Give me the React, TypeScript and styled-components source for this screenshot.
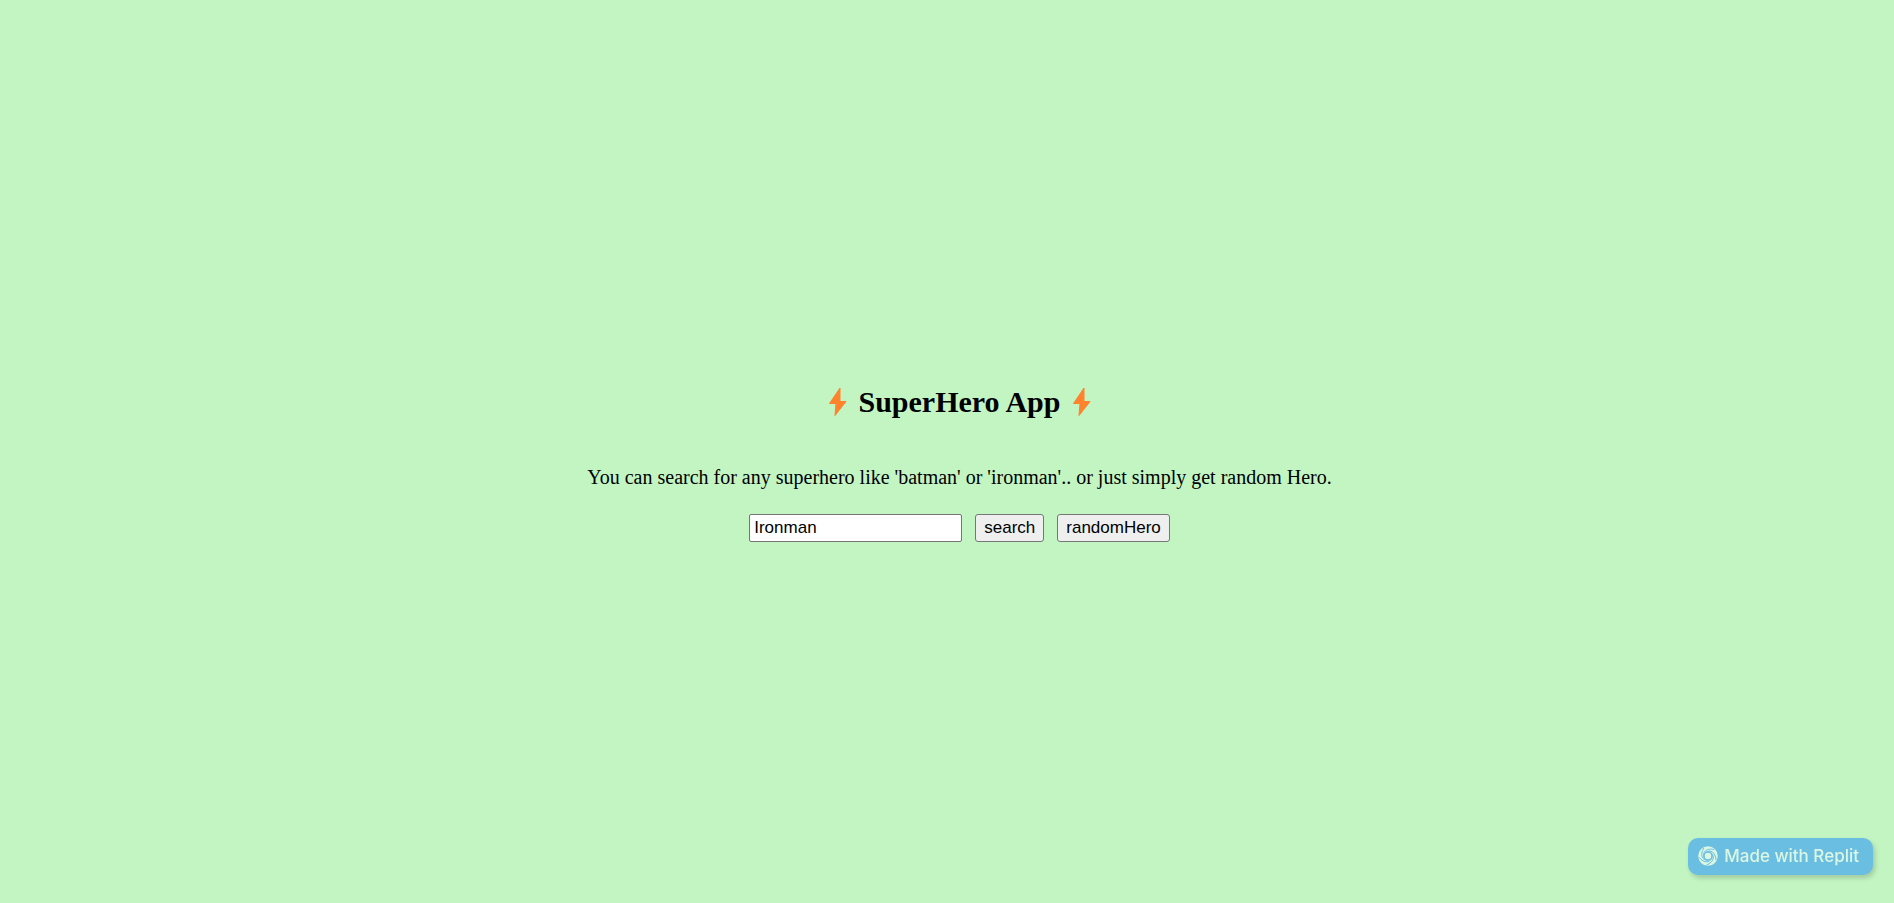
import React from "react";
import styled, { createGlobalStyle } from "styled-components";

const GlobalStyle = createGlobalStyle`
  body {
    margin: 0;
    background: #c3f5c3;
    color: #000;
    font-family: "Liberation Serif", serif;
    font-size: 20px;
  }
`;

const Page = styled.main`
  box-sizing: border-box;
  min-height: 100vh;
  padding: 23px 0 0 25px;
  display: flex;
  flex-direction: column;
  align-items: center;
  justify-content: center;
`;

const Title = styled.h1`
  margin: 0 0 45px;
  display: flex;
  align-items: center;
  gap: 8px;
  font-size: 30px;
  line-height: 36px;
`;

const BoltIcon = styled.svg`
  width: 26px;
  height: 32px;
`;

const Hint = styled.p`
  margin: 0 0 25px;
  line-height: 24px;
`;

const SearchForm = styled.form`
  display: flex;
  gap: 13px;
`;

const NameInput = styled.input`
  box-sizing: border-box;
  width: 213px;
  height: 28px;
  padding: 1px 4px;
  border: 1px solid #767676;
  border-radius: 2px;
  font: 17px "Liberation Sans", sans-serif;
`;

const Button = styled.button`
  box-sizing: border-box;
  height: 28px;
  padding: 1px 8px;
  border: 1px solid #767676;
  border-radius: 3px;
  background: #efefef;
  color: #000;
  font: 17px "Liberation Sans", sans-serif;
`;

const Badge = styled.a`
  position: fixed;
  right: 21px;
  bottom: 28px;
  box-sizing: border-box;
  height: 37px;
  padding: 0 14px 1px 10px;
  display: flex;
  align-items: center;
  gap: 6px;
  border-radius: 10px;
  background: #69bee1;
  box-shadow: 2px 3px 5px rgba(0, 0, 0, 0.18);
  color: #dcf6e4;
  font: 500 17px Inter, sans-serif;
  text-decoration: none;
`;

const SwirlIcon = styled.svg`
  width: 20px;
  height: 20px;
`;

const Bolt = () => (
  <BoltIcon viewBox="0 0 26 32" aria-hidden="true">
    <path
      d="M15 2 4.500 17.500h6.500L10 29.500 21 15.500h-6z"
      fill="#ff822d"
      stroke="#ff822d"
      strokeWidth="1"
      strokeLinejoin="round"
    />
  </BoltIcon>
);

const arms = [0, 72, 144, 216, 288];

const Swirl = () => (
  <SwirlIcon viewBox="0 0 40 40" aria-hidden="true">
    <circle cx="20" cy="20" r="19.500" fill="#dcf6e4" />
    <g fill="none" stroke="#69bee1" strokeWidth="1.800" strokeLinecap="round">
      {arms.map((angle) => (
        <path key={angle} d="M11.500 22C8 12 17 3 32 7" transform={`rotate(${angle} 20 20)`} />
      ))}
    </g>
    <circle cx="20" cy="20" r="8" fill="none" stroke="#69bee1" strokeWidth="3" />
  </SwirlIcon>
);

export default function App() {
  return (
    <>
      <GlobalStyle />
      <Page>
        <Title><Bolt />SuperHero App<Bolt /></Title>
        <Hint>You can search for any superhero like 'batman' or 'ironman'.. or just simply get random Hero.</Hint>
        <SearchForm>
          <NameInput aria-label="Superhero name" defaultValue="Ironman" />
          <Button type="button">search</Button>
          <Button type="button">randomHero</Button>
        </SearchForm>
      </Page>
      <Badge href="#"><Swirl />Made with Replit</Badge>
    </>
  );
}
